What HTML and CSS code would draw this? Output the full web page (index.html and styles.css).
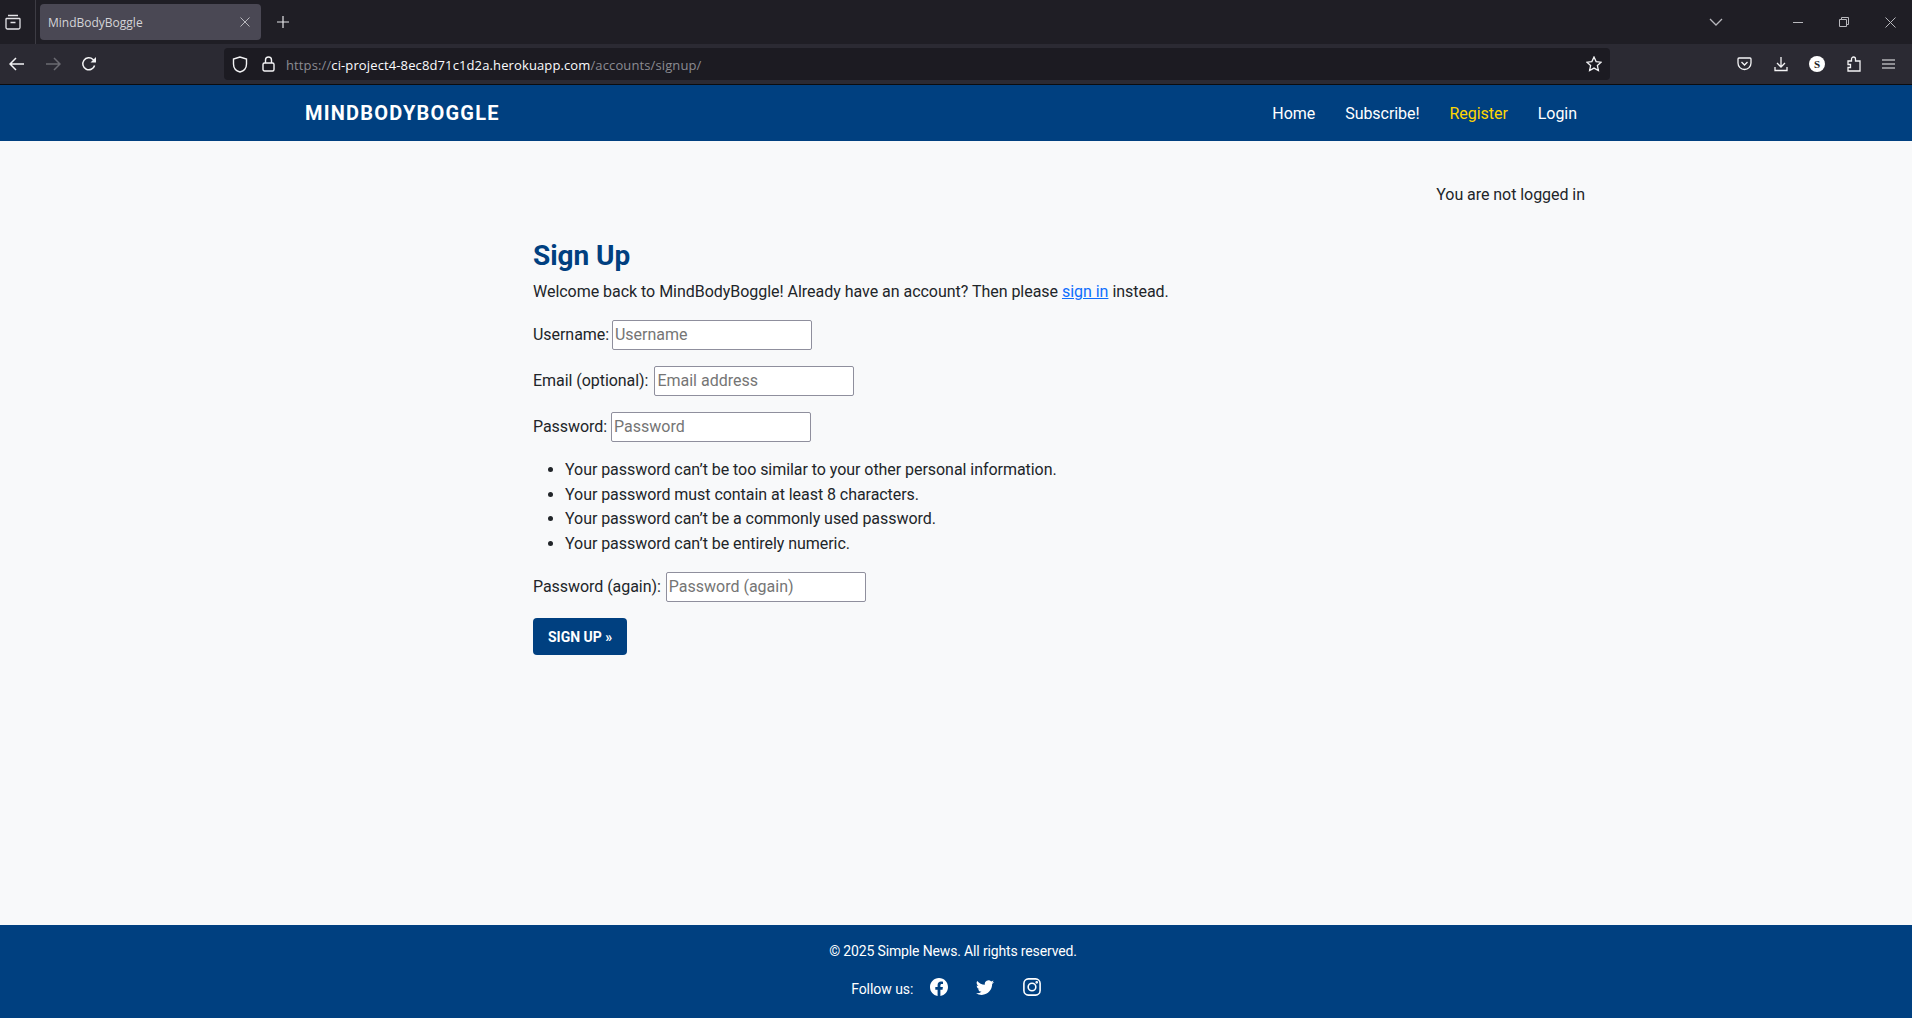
FILE: index.html
```html
<!doctype html>
<html lang="en">
<head>
  <meta charset="UTF-8">
  <meta name="viewport" content="width=device-width, initial-scale=1.0">

  <title>MindBodyBoggle</title>

  <link rel="stylesheet" href="styles.css">
</head>

<body>
  <div id="browser">
    <div class="tabbar">
      <div class="tabs-btn">
        <svg width="16" height="16" viewBox="0 0 16 16" fill="none" stroke="#e4e4e8" stroke-width="1.300">
          <path d="M3 1.500h10M1.700 4.500h12.600a.7.700 0 0 1 .7.700v8.300a1.500 1.500 0 0 1-1.500 1.500H2.500A1.500 1.500 0 0 1 1 13.500V5.200a.7.700 0 0 1 .7-.7zM5.500 8.500h5"/>
        </svg>
      </div>
      <div class="tab">
        <span>MindBodyBoggle</span>
        <svg width="10" height="10" viewBox="0 0 10 10" stroke="#b8b8bd" stroke-width="1"><path d="M.5.5l9 9M9.500.5l-9 9"/></svg>
      </div>
      <svg class="new-tab" width="12" height="12" viewBox="0 0 12 12" stroke="#e4e4e8" stroke-width="1.2"><path d="M6 0v12M0 6h12"/></svg>
      <svg class="tab-list" width="14" height="8" viewBox="0 0 14 8" fill="none" stroke="#b8b8bd" stroke-width="1.300"><path d="M1 1l6 6 6-6"/></svg>
      <div class="window-btns">
        <svg width="10" height="10" viewBox="0 0 10 10" stroke="#b8b8bd"><path d="M0 5.500h10"/></svg>
        <svg width="10" height="10" viewBox="0 0 10 10" fill="none" stroke="#b8b8bd"><path d="M.5 2.500h7v7h-7zM2.500 2.500v-2h7v7h-2"/></svg>
        <svg width="11" height="11" viewBox="0 0 11 11" stroke="#b8b8bd"><path d="M.5.5l10 10M10.500.5l-10 10"/></svg>
      </div>
    </div>

    <div class="toolbar">
      <svg class="back" width="16" height="14" viewBox="0 0 16 14" fill="none" stroke="#f4f4f6" stroke-width="1.500"><path d="M15 7H1.500M7 1L1 7l6 6"/></svg>
      <svg class="forward" width="16" height="14" viewBox="0 0 16 14" fill="none" stroke="#6b6b72" stroke-width="1.500"><path d="M1 7h13.500M9 1l6 6-6 6"/></svg>
      <svg class="reload" width="16" height="16" viewBox="0 0 16 16" fill="none" stroke="#f4f4f6" stroke-width="1.500"><path d="M13.600 9.500A6 6 0 1 1 12 3.500L14 5.500"/><path d="M15 1v5.500H9.500z" fill="#f4f4f6" stroke="none"/></svg>

      <div class="urlbar">
        <svg width="16" height="17" viewBox="0 0 16 17" fill="none" stroke="#f4f4f6" stroke-width="1.400"><path d="M8 1L1.500 3v5c0 4 3 7 6.500 8 3.500-1 6.500-4 6.500-8V3z"/></svg>
        <svg class="lock" width="13" height="16" viewBox="0 0 13 16" fill="none" stroke="#f4f4f6" stroke-width="1.400"><rect x="1" y="7" width="11" height="8" rx="1.500"/><path d="M3.500 7V4a3 3 0 0 1 6 0v3"/></svg>
        <span class="url"><i>https://</i>ci-project4-8ec8d71c1d2a.herokuapp.com<i>/accounts/signup/</i></span>
        <svg class="star" width="16" height="16" viewBox="0 0 16 16" fill="none" stroke="#f4f4f6" stroke-width="1.300"><path d="M8 1l2.100 4.600 5 .6-3.700 3.400 1 5L8 12.100 3.600 14.600l1-5L.9 6.200l5-.6z"/></svg>
      </div>

      <div class="tools">
        <svg width="15" height="14" viewBox="0 0 15 14" fill="none" stroke="#f4f4f6" stroke-width="1.300"><path d="M2 1h11a1 1 0 0 1 1 1v4a6.500 6.500 0 0 1-13 0V2a1 1 0 0 1 1-1z"/><path d="M4.500 5l3 3 3-3"/></svg>
        <svg width="14" height="16" viewBox="0 0 14 16" fill="none" stroke="#f4f4f6" stroke-width="1.300"><path d="M7 1v9.500M3 7l4 4 4-4M1 11v3.500h12V11"/></svg>
        <span class="avatar">S</span>
        <svg width="14" height="16" viewBox="0 0 14 16" fill="none" stroke="#f4f4f6" stroke-width="1.300"><path d="M1 5h3.500V3a2 2 0 0 1 4 0v2H13v10H1v-3.500h2.500v-3H1z"/></svg>
        <svg width="13" height="10" viewBox="0 0 13 10" stroke="#f4f4f6" stroke-width="1.200"><path d="M0 1h13M0 5h13M0 9h13"/></svg>
      </div>
    </div>
  </div>

  <nav id="nav">
    <a class="brand" href="#">MINDBODYBOGGLE</a>
    <ul class="nav-links">
      <li><a href="#">Home</a></li>
      <li><a href="#">Subscribe!</a></li>
      <li><a class="active" href="#">Register</a></li>
      <li><a href="#">Login</a></li>
    </ul>
  </nav>

  <main id="main">
    <p class="status">You are not logged in</p>

    <h2>Sign Up</h2>
    <p class="intro">Welcome back to MindBodyBoggle! Already have an account? Then please <a href="#">sign in</a> instead.</p>

    <form action="" onsubmit="return false;">
      <p><label for="username">Username:</label> <input type="text" id="username" placeholder="Username"></p>
      <p><label for="email">Email (optional):</label> <input type="email" id="email" placeholder="Email address"></p>
      <p><label for="password1">Password:</label> <input type="password" id="password1" placeholder="Password"></p>
      <ul class="help">
        <li>Your password can’t be too similar to your other personal information.</li>
        <li>Your password must contain at least 8 characters.</li>
        <li>Your password can’t be a commonly used password.</li>
        <li>Your password can’t be entirely numeric.</li>
      </ul>
      <p><label for="password2">Password (again):</label> <input type="password" id="password2" placeholder="Password (again)"></p>
      <button type="submit">SIGN UP »</button>
    </form>
  </main>

  <footer id="footer">
    <p>© 2025 Simple News. All rights reserved.</p>
    <div class="social">
      <span>Follow us:</span>
      <svg width="18" height="18" viewBox="0 0 16 16" fill="#fff"><path d="M16 8.049c0-4.446-3.582-8.050-8-8.050C3.580 0-.002 3.603-.002 8.050c0 4.017 2.926 7.347 6.750 7.951v-5.625h-2.030V8.050H6.750V6.275c0-2.017 1.195-3.131 3.022-3.131.876 0 1.791.157 1.791.157v1.980h-1.009c-.993 0-1.303.621-1.303 1.258v1.510h2.218l-.354 2.326H9.250V16c3.824-.604 6.750-3.934 6.750-7.951z"/></svg>
      <svg width="18" height="18" viewBox="0 0 16 16" fill="#fff"><path d="M5.026 15c6.038 0 9.341-5.003 9.341-9.334 0-.14 0-.282-.006-.422A6.685 6.685 0 0 0 16 3.542a6.658 6.658 0 0 1-1.889.518 3.301 3.301 0 0 0 1.447-1.817 6.533 6.533 0 0 1-2.087.793A3.286 3.286 0 0 0 7.875 6.030a9.325 9.325 0 0 1-6.767-3.429 3.289 3.289 0 0 0 1.018 4.382A3.323 3.323 0 0 1 .640 6.575v.045a3.288 3.288 0 0 0 2.632 3.218 3.203 3.203 0 0 1-.865.115 3.230 3.230 0 0 1-.614-.057 3.283 3.283 0 0 0 3.067 2.277A6.588 6.588 0 0 1 .780 13.580a6.320 6.320 0 0 1-.780-.045A9.344 9.344 0 0 0 5.026 15z"/></svg>
      <svg width="18" height="18" viewBox="0 0 16 16" fill="none" stroke="#fff" stroke-width="1.400"><rect x=".8" y=".8" width="14.400" height="14.400" rx="4"/><circle cx="8" cy="8" r="3.400"/><circle cx="12.200" cy="3.800" r=".5" fill="#fff"/></svg>
    </div>
  </footer>
</body>
</html>
```

FILE: styles.css
```css
*{
  box-sizing: border-box;
}

html, body{
  height: 100%;
}

body{
  display: flex;
  margin: 0;
  color: #212529;
  font-family: Roboto, sans-serif;
  font-size: 16px;
  line-height: 24px;
  letter-spacing: -.05px;
  background-color: #f8f9fa;
  flex-direction: column;
}

/* browser chrome */
#browser{
  flex: none;
  font-family: "Open Sans", sans-serif;
  letter-spacing: 0;
  border-bottom: 1px solid #0c0c0e;
}

.tabbar{
  display: flex;
  align-items: center;
  height: 44px;
  background: #1f1e25;
}

.tabs-btn{
  display: flex;
  flex: none;
  align-items: center;
  padding-left: 5px;
  width: 36px;
  height: 44px;
  border-right: 1px solid #3d3c44;
}

.tab{
  display: flex;
  align-items: center;
  justify-content: space-between;
  margin-left: 4px;
  padding: 0 11px 0 8px;
  width: 221px;
  height: 36px;
  color: #d4d4d8;
  font-size: 12px;
  background: #4a4854;
  border-radius: 4px;
}

.tab span{
  padding-top: 2px;
}

.new-tab{
  margin-left: 16px;
}

.tab-list{
  margin-left: auto;
}

.window-btns{
  display: flex;
  align-items: center;
  gap: 36px;
  margin: 0 16px 0 70px;
}

.toolbar{
  display: flex;
  align-items: center;
  height: 40px;
  background: #2b2a33;
}

.back{
  margin-left: 9px;
}

.forward{
  margin-left: 20px;
}

.reload{
  margin-left: 20px;
}

.urlbar{
  display: flex;
  align-items: center;
  margin-left: 127px;
  padding: 0 8px;
  width: 1386px;
  height: 32px;
  background: #1c1b22;
  border-radius: 4px;
}

.lock{
  margin-left: 14px;
}

.url{
  margin-left: 11px;
  padding-top: 2px;
  color: #fbfbfe;
  font-size: 13px;
  letter-spacing: .12px;
}

.url i{
  color: #8b8b92;
  font-style: normal;
}

.star{
  margin-left: auto;
}

.tools{
  display: flex;
  align-items: center;
  gap: 21.500px;
  margin-left: 127px;
}

.avatar{
  display: flex;
  align-items: center;
  justify-content: center;
  width: 16px;
  height: 16px;
  color: #1c1b22;
  font-family: "Liberation Serif", serif;
  font-size: 11px;
  font-weight: bold;
  background: #fff;
  border-radius: 50%;
}

/* site nav */
#nav{
  display: flex;
  flex: none;
  align-items: center;
  justify-content: space-between;
  padding: 0 335px 0 305px;
  height: 56px;
  background: #004080;
}

.brand{
  color: #fff;
  font-size: 20px;
  font-weight: bold;
  letter-spacing: 1.200px;
  text-decoration: none;
}

.nav-links{
  display: flex;
  gap: 30px;
  margin: 0;
  padding: 2px 0 0;
  list-style: none;
}

.nav-links a{
  color: #fff;
  text-decoration: none;
}

.nav-links a.active{
  color: #ffd700;
}

/* page */
#main{
  flex: 1;
  padding: 0 327px 0 533px;
}

.status{
  margin: 42px 0 0;
  text-align: right;
}

h2{
  margin: 32px 0 0;
  color: #004080;
  font-size: 28px;
  line-height: 34px;
}

.intro{
  margin: 7px 0 0;
  letter-spacing: -.03px;
}

.intro a{
  color: #0d6efd;
}

form{
  margin-top: 16px;
}

form p{
  margin: 0 0 16px;
  height: 30px;
}

input{
  padding: 0 2px 2px;
  width: 200px;
  height: 30px;
  font-family: Roboto, sans-serif;
  font-size: 16px;
  vertical-align: baseline;
  background: #fff;
  border: 1px solid #8f8f9d;
  border-radius: 2px;
}

#username{
  margin-left: -1px;
}

#email{
  margin-left: 2px;
}

#password2{
  margin-left: 1px;
}

.help{
  margin: 0 0 16px;
  padding-left: 32px;
  line-height: 24.500px;
}

button{
  padding: 0 15px;
  height: 37px;
  color: #fff;
  font-family: Roboto, sans-serif;
  font-size: 14px;
  font-weight: bold;
  background: #004080;
  border: none;
  border-radius: 4px;
}

/* footer */
#footer{
  flex: none;
  padding: 14px 6px 0 0;
  height: 93px;
  color: #fff;
  font-size: 14px;
  text-align: center;
  background: #004080;
}

#footer p{
  margin: 0;
  letter-spacing: -.15px;
}

.social{
  display: flex;
  align-items: center;
  justify-content: center;
  gap: 28.500px;
  margin-top: 14px;
  padding-right: 14px;
}

.social span{
  margin-right: -12px;
}

.social svg{
  margin-bottom: 4px;
}
```
